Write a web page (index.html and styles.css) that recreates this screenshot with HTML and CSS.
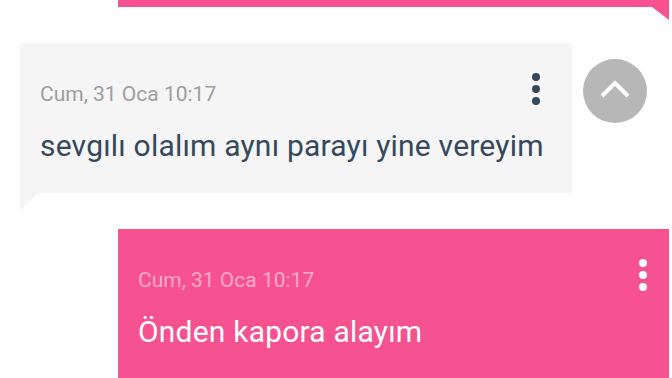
FILE: index.html
```html
<!DOCTYPE html>
<html lang="tr">
<head>
    <meta charset="UTF-8">
    <meta name="viewport" content="width=device-width, initial-scale=1.0">
    <title>Mesajlar</title>
    <link rel="stylesheet" href="styles.css">
</head>
<body>
    <div class="thread">
        <!-- previous message, scrolled mostly out of view -->
        <div class="message outgoing previous"></div>

        <div class="message incoming">
            <div class="message-header">
                <span class="timestamp">Cum, 31 Oca 10:17</span>
                <span class="menu"><i></i><i></i><i></i></span>
            </div>
            <div class="message-text">sevgılı olalım aynı parayı yine vereyim</div>
        </div>

        <div class="message outgoing">
            <div class="message-header">
                <span class="timestamp">Cum, 31 Oca 10:17</span>
                <span class="menu"><i></i><i></i><i></i></span>
            </div>
            <div class="message-text">Önden kapora alayım</div>
        </div>
    </div>

    <button class="scroll-top" aria-label="Yukarı">
        <svg width="30" height="18" viewBox="0 0 30 18">
            <path d="M2 16 L15 3 L28 16" fill="none" stroke="#fff" stroke-width="4"/>
        </svg>
    </button>
</body>
</html>
```

FILE: styles.css
```css
body {
    margin: 0;
    background-color: #fff;
    font-family: Roboto, "Noto Sans", sans-serif;
    overflow: hidden;
}
.thread {
    display: flex;
    flex-direction: column;
    gap: 36px;
}
.message {
    position: relative;
    box-sizing: border-box;
    padding: 39px 20px 30px 20px;
}
.message.incoming {
    margin-left: 20px;
    width: 552px;
    height: 150px;
    background-color: #f5f5f5;
}
.message.incoming::after {
    content: "";
    position: absolute;
    left: 0;
    top: 100%;
    border-top: 18px solid #f5f5f5;
    border-right: 18px solid transparent;
}
.message.outgoing {
    margin-left: 118px;
    width: 551px;
    min-height: 150px;
    background-color: #f5528f;
}
.message.outgoing::after {
    content: "";
    position: absolute;
    right: 0;
    top: 100%;
    border-top: 13px solid #f5528f;
    border-left: 17px solid transparent;
}
.message.previous {
    margin-top: -143px;
}
.message-header {
    display: flex;
    justify-content: space-between;
    align-items: center;
}
.timestamp {
    font-size: 21px;
    line-height: 24px;
    color: #9e9e9e;
}
.outgoing .timestamp {
    color: #fbaac9;
}
.menu {
    display: flex;
    flex-direction: column;
    gap: 4px;
    margin-top: -10px;
    margin-right: 12px;
}
.menu i {
    width: 8px;
    height: 8px;
    border-radius: 50%;
    background-color: #34495e;
}
.outgoing .menu {
    margin-right: 2px;
}
.outgoing .menu i {
    background-color: #fff;
}
.message-text {
    margin-top: 23px;
    font-size: 30px;
    line-height: 34px;
    letter-spacing: 0.2px;
    color: #34495e;
}
.outgoing .message-text {
    color: #fff;
}
.scroll-top {
    position: absolute;
    left: 583px;
    top: 59px;
    width: 64px;
    height: 64px;
    border: none;
    border-radius: 50%;
    background-color: #b7b7b7;
    display: flex;
    align-items: center;
    justify-content: center;
    padding: 0 0 4px 0;
    cursor: pointer;
}
```
